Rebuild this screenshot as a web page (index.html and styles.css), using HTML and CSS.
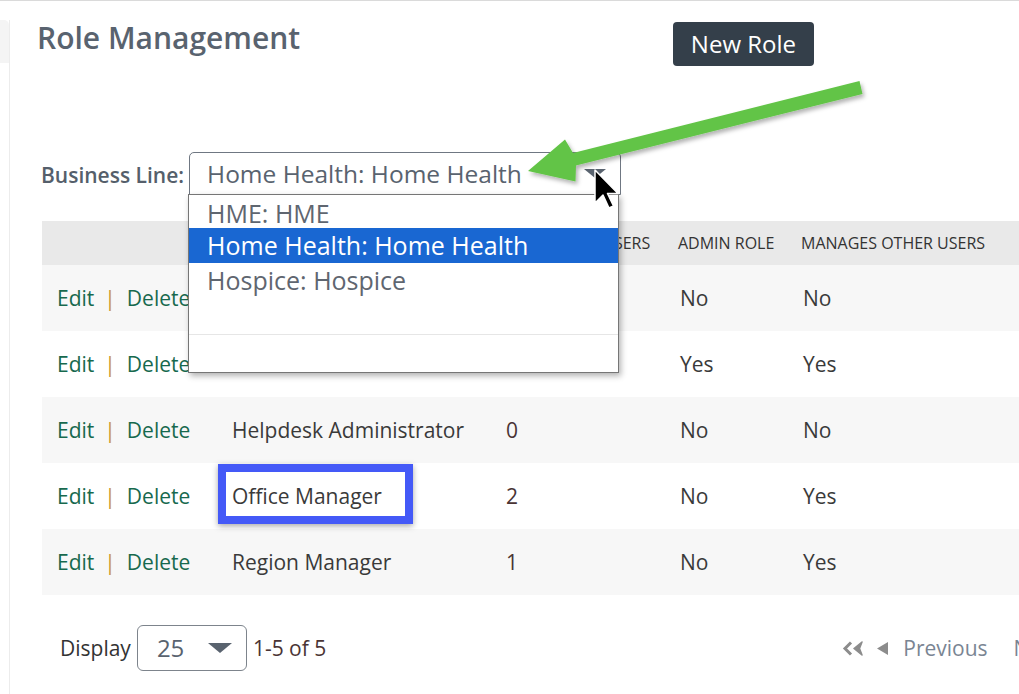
FILE: index.html
```html
<!DOCTYPE html>
<html lang="en">
<head>
    <meta charset="UTF-8">
    <meta name="viewport" content="width=device-width, initial-scale=1.0">
    <title>Role Management</title>
    <link rel="stylesheet" href="styles.css">
</head>
<body>
    <div class="layout">
        <div class="sidebar">
            <div class="sidebar-tab"></div>
        </div>

        <div class="main">
            <div class="page-header">
                <h1 class="page-title">Role Management</h1>
                <button class="new-role">New Role</button>
            </div>

            <div class="business-line">
                <label class="bl-label">Business Line:</label>
                <div class="select select-open">
                    <span class="select-value">Home Health: Home Health</span>
                    <span class="caret"></span>
                    <div class="options">
                        <div class="option">HME: HME</div>
                        <div class="option selected">Home Health: Home Health</div>
                        <div class="option">Hospice: Hospice</div>
                        <div class="option"></div>
                        <div class="options-footer"></div>
                    </div>
                </div>
            </div>

            <table class="roles">
                <colgroup>
                    <col style="width: 174px">
                    <col style="width: 276px">
                    <col style="width: 172px">
                    <col style="width: 123px">
                    <col style="width: 265px">
                </colgroup>
                <thead>
                    <tr>
                        <th></th>
                        <th>Role Name</th>
                        <th>Number of Users</th>
                        <th>Admin Role</th>
                        <th>Manages Other Users</th>
                    </tr>
                </thead>
                <tbody>
                    <tr>
                        <td><a class="link">Edit</a><span class="pipe">|</span><a class="link">Delete</a></td>
                        <td>Accounting</td>
                        <td class="count">0</td>
                        <td>No</td>
                        <td>No</td>
                    </tr>
                    <tr>
                        <td><a class="link">Edit</a><span class="pipe">|</span><a class="link">Delete</a></td>
                        <td>Administrator</td>
                        <td class="count">1</td>
                        <td>Yes</td>
                        <td>Yes</td>
                    </tr>
                    <tr>
                        <td><a class="link">Edit</a><span class="pipe">|</span><a class="link">Delete</a></td>
                        <td>Helpdesk Administrator</td>
                        <td class="count">0</td>
                        <td>No</td>
                        <td>No</td>
                    </tr>
                    <tr>
                        <td><a class="link">Edit</a><span class="pipe">|</span><a class="link">Delete</a></td>
                        <td class="name-cell"><span class="callout"></span>Office Manager</td>
                        <td class="count">2</td>
                        <td>No</td>
                        <td>Yes</td>
                    </tr>
                    <tr>
                        <td><a class="link">Edit</a><span class="pipe">|</span><a class="link">Delete</a></td>
                        <td>Region Manager</td>
                        <td class="count">1</td>
                        <td>No</td>
                        <td>Yes</td>
                    </tr>
                </tbody>
            </table>

            <div class="pager">
                <span class="pager-label">Display</span>
                <div class="select select-small">
                    <span class="select-value">25</span>
                    <span class="caret caret-lg"></span>
                </div>
                <span class="pager-range">1-5 of 5</span>

                <div class="pager-nav">
                    <svg class="nav-icon" width="21" height="15" viewBox="0 0 21 15">
                        <path d="M9 1.5 L3 7.5 L9 13.5" fill="none" stroke="#8c8c8c" stroke-width="3"/>
                        <path d="M20 1 L12 7.5 L20 14 L17.5 7.5 Z" fill="#8c8c8c" stroke="#8c8c8c" stroke-width="1.5" stroke-linejoin="round"/>
                    </svg>
                    <svg class="nav-icon" width="12" height="13" viewBox="0 0 12 13">
                        <path d="M0 6.5 L11 0 L11 13 Z" fill="#8c8c8c"/>
                    </svg>
                    <span class="nav-text">Previous</span>
                    <span class="nav-text">Next</span>
                </div>
            </div>
        </div>
    </div>

    <!-- annotation overlay: green arrow + mouse pointer -->
    <svg class="overlay" width="1019" height="694" viewBox="0 0 1019 694">
        <defs>
            <filter id="drop" x="-10%" y="-10%" width="130%" height="140%">
                <feDropShadow dx="2" dy="3" stdDeviation="2" flood-color="#000" flood-opacity="0.3"/>
            </filter>
        </defs>
        <polygon filter="url(#drop)" fill="#62c446"
            points="528,171 565,139.5 573,153 859.5,81 862.5,94 576,165.5 575.5,181.5"/>
        <polygon fill="#000" stroke="#fff" stroke-width="1.5" stroke-linejoin="round"
            points="595,170 595,203 603,195 609,208 613.5,206 607.5,193.5 618,193.5"/>
    </svg>
</body>
</html>
```

FILE: styles.css
```css
html, body {
    margin: 0;
    padding: 0;
}
body {
    position: relative;
    width: 1019px;
    height: 694px;
    overflow: hidden;
    background-color: #fff;
    font-family: "Open Sans", "Liberation Sans", sans-serif;
    color: #333;
}
.layout {
    display: flex;
    min-height: 100vh;
    border-top: 1px solid #dadada;
    box-sizing: border-box;
}
.sidebar {
    flex: 0 0 9px;
    margin-top: 19px;
    border-right: 1px solid #ececec;
}
.sidebar-tab {
    height: 43px;
    background-color: #f4f4f4;
    border-top-right-radius: 5px;
}
.main {
    flex: 1;
    min-width: 0;
    padding-left: 32px;
    overflow: hidden;
}

/* header */
.page-header {
    display: flex;
    justify-content: space-between;
    align-items: flex-start;
    width: 772px;
}
.page-title {
    margin: 19px 0 0 -5px;
    font-size: 30px;
    line-height: 36px;
    font-weight: 600;
    color: #59636f;
}
.new-role {
    margin-top: 21px;
    height: 44px;
    padding: 0 18px;
    border: none;
    border-radius: 4px;
    background-color: #343f4a;
    color: #fff;
    font-family: inherit;
    font-size: 24px;
    line-height: 44px;
}

/* business line select */
.business-line {
    display: flex;
    align-items: baseline;
    margin-top: 86px;
}
.bl-label {
    margin-left: -1px;
    margin-right: 5px;
    font-size: 21px;
    font-weight: 600;
    color: #555f6b;
}
.select {
    position: relative;
    display: flex;
    align-items: center;
    flex-shrink: 0;
    box-sizing: border-box;
    border: 1px solid #6f7782;
    background-color: #fff;
    color: #59636f;
}
.select-open {
    width: 432px;
    height: 43px;
    padding-left: 17px;
    border-radius: 5px 5px 0 0;
    font-size: 24.5px;
    line-height: 41px;
}
.caret {
    margin-left: auto;
    margin-right: 14px;
    width: 0;
    height: 0;
    border-left: 11px solid transparent;
    border-right: 11px solid transparent;
    border-top: 9px solid #59636f;
}
.caret-lg {
    border-left-width: 12px;
    border-right-width: 12px;
    border-top-width: 10px;
}
.options {
    position: absolute;
    top: 41px;
    left: -2px;
    z-index: 3;
    width: 431px;
    box-sizing: border-box;
    border: 1px solid #767676;
    background-color: #fff;
    box-shadow: 2px 3px 6px rgba(0, 0, 0, 0.3);
}
.option {
    height: 34px;
    padding-left: 18px;
    font-size: 25px;
    line-height: 34px;
    color: #5f6670;
}
.option:first-child {
    height: 33px;
    line-height: 36px;
}
.option.selected {
    height: 35px;
    line-height: 35px;
    background-color: #1967d2;
    color: #fff;
}
.options-footer {
    height: 37px;
    margin-top: 3px;
    border-top: 1px solid #e6e6e6;
}

/* table */
.roles {
    margin-top: 26px;
    width: 1010px;
    table-layout: fixed;
    border-collapse: collapse;
    border-spacing: 0;
}
.roles th {
    height: 44px;
    padding: 0 14px;
    background-color: #e9e9e9;
    text-align: left;
    text-transform: uppercase;
    font-size: 16px;
    font-weight: 400;
    color: #333;
    white-space: nowrap;
}
.roles td {
    height: 66px;
    padding: 0 14px 0 16px;
    font-size: 21px;
    color: #3a3a3a;
    white-space: nowrap;
}
.roles tbody tr:nth-child(odd) {
    background-color: #f7f7f7;
}
.link {
    color: #17694e;
}
.pipe {
    margin: 0 11px 0 10px;
    color: #c8962e;
}
.roles td:first-child {
    padding-left: 15px;
}
.roles td.count {
    padding-left: 14px;
    color: #4a3434;
}
.name-cell {
    position: relative;
}
.callout {
    position: absolute;
    left: 2px;
    top: 1px;
    width: 195px;
    height: 60px;
    box-sizing: border-box;
    border: 8px solid #4459f7;
    box-shadow: 0 2px 6px rgba(0, 0, 0, 0.35);
}

/* pager */
.pager {
    display: flex;
    align-items: center;
    margin-top: 30px;
    padding-left: 18px;
    white-space: nowrap;
}
.pager > * {
    flex-shrink: 0;
}
.pager-label {
    font-size: 21px;
    color: #333;
}
.select-small {
    width: 110px;
    height: 46px;
    margin-left: 6px;
    padding-left: 19px;
    border-radius: 6px;
    border-color: #7d848c;
    font-size: 24px;
    line-height: 44px;
}
.pager-range {
    margin-left: 6px;
    font-size: 21px;
    color: #4a3434;
}
.pager-nav {
    display: flex;
    align-items: center;
    margin-left: 516px;
}
.nav-icon {
    margin-right: 14px;
}
.nav-text {
    margin-right: 26px;
    font-size: 21px;
    color: #7a8593;
}

.overlay {
    position: absolute;
    top: 0;
    left: 0;
    z-index: 10;
    pointer-events: none;
}
```
